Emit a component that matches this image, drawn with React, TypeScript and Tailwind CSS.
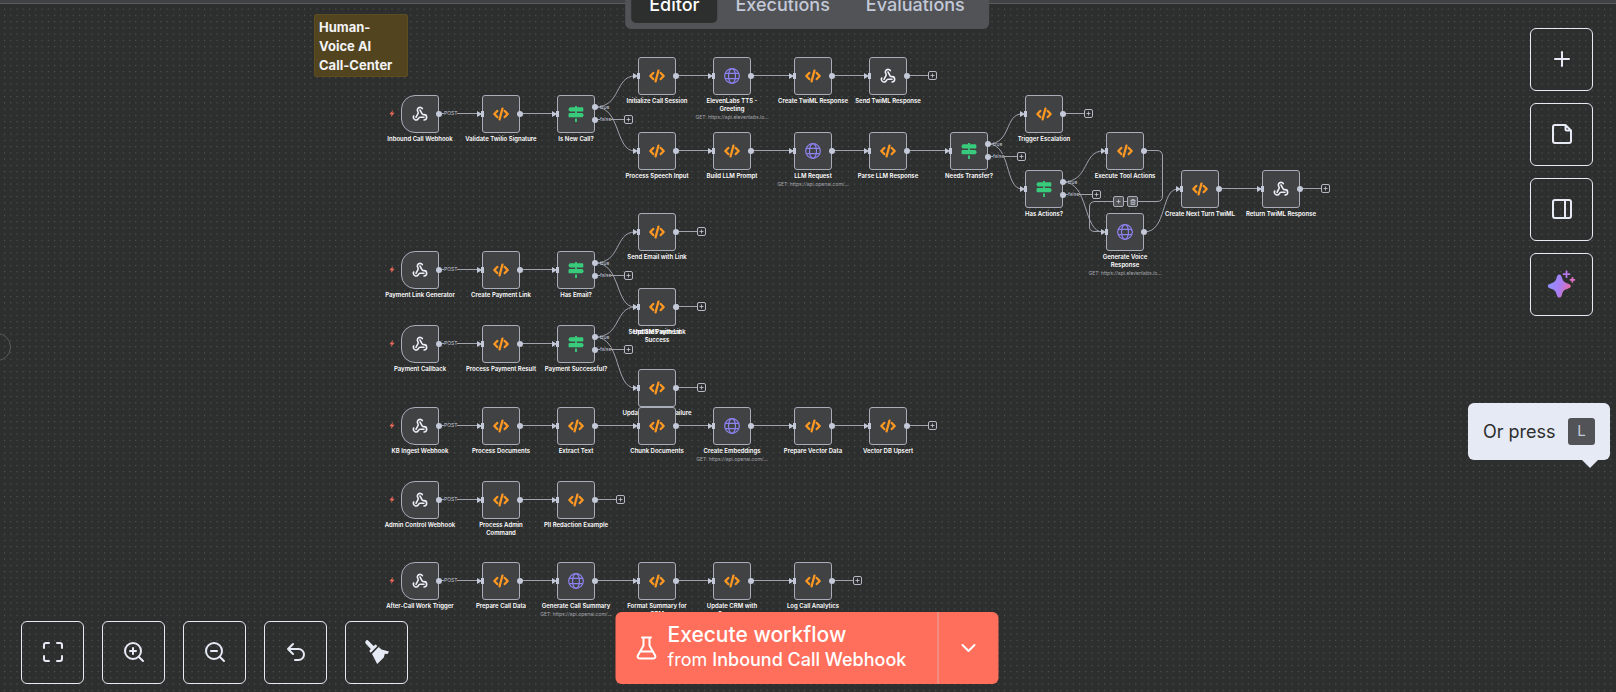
import React from "react";
import { Webhook } from "lucide-react";

type Kind = "hook" | "code" | "if" | "http";
type Item = { x: number; y: number; kind: Kind; label: string; sub?: string; end?: boolean };

const ELEVEN = "GET: https://api.elevenlabs.io...";
const OPENAI = "GET: https://api.openai.com/...";

const items: Item[] = [
  { x: 401, y: 95, kind: "hook", label: "Inbound Call Webhook" },
  { x: 482, y: 95, kind: "code", label: "Validate Twilio Signature" },
  { x: 557, y: 95, kind: "if", label: "Is New Call?" },
  { x: 638, y: 57, kind: "code", label: "Initialize Call Session" },
  { x: 713, y: 57, kind: "http", label: "ElevenLabs TTS -\nGreeting", sub: ELEVEN },
  { x: 794, y: 57, kind: "code", label: "Create TwiML Response" },
  { x: 869, y: 57, kind: "hook", label: "Send TwiML Response", end: true },
  { x: 638, y: 132, kind: "code", label: "Process Speech Input" },
  { x: 713, y: 132, kind: "code", label: "Build LLM Prompt" },
  { x: 794, y: 132, kind: "http", label: "LLM Request", sub: OPENAI },
  { x: 869, y: 132, kind: "code", label: "Parse LLM Response" },
  { x: 950, y: 132, kind: "if", label: "Needs Transfer?" },
  { x: 1025, y: 95, kind: "code", label: "Trigger Escalation", end: true },
  { x: 1025, y: 170, kind: "if", label: "Has Actions?" },
  { x: 1106, y: 132, kind: "code", label: "Execute Tool Actions" },
  { x: 1106, y: 213, kind: "http", label: "Generate Voice\nResponse", sub: ELEVEN },
  { x: 1181, y: 170, kind: "code", label: "Create Next Turn TwiML" },
  { x: 1262, y: 170, kind: "hook", label: "Return TwiML Response", end: true },
  { x: 401, y: 251, kind: "hook", label: "Payment Link Generator" },
  { x: 482, y: 251, kind: "code", label: "Create Payment Link" },
  { x: 557, y: 251, kind: "if", label: "Has Email?" },
  { x: 638, y: 213, kind: "code", label: "Send Email with Link", end: true },
  { x: 638, y: 288, kind: "code", label: "Send SMS with Link", end: true },
  { x: 638, y: 288, kind: "code", label: "Update Payment\nSuccess", end: true },
  { x: 401, y: 325, kind: "hook", label: "Payment Callback" },
  { x: 482, y: 325, kind: "code", label: "Process Payment Result" },
  { x: 557, y: 325, kind: "if", label: "Payment Successful?" },
  { x: 638, y: 369, kind: "code", label: "Update Payment Failure", end: true },
  { x: 401, y: 407, kind: "hook", label: "KB Ingest Webhook" },
  { x: 482, y: 407, kind: "code", label: "Process Documents" },
  { x: 557, y: 407, kind: "code", label: "Extract Text" },
  { x: 638, y: 407, kind: "code", label: "Chunk Documents" },
  { x: 713, y: 407, kind: "http", label: "Create Embeddings", sub: OPENAI },
  { x: 794, y: 407, kind: "code", label: "Prepare Vector Data" },
  { x: 869, y: 407, kind: "code", label: "Vector DB Upsert", end: true },
  { x: 401, y: 481, kind: "hook", label: "Admin Control Webhook" },
  { x: 482, y: 481, kind: "code", label: "Process Admin\nCommand" },
  { x: 557, y: 481, kind: "code", label: "PII Redaction Example", end: true },
  { x: 401, y: 562, kind: "hook", label: "After-Call Work Trigger" },
  { x: 482, y: 562, kind: "code", label: "Prepare Call Data" },
  { x: 557, y: 562, kind: "http", label: "Generate Call Summary", sub: OPENAI },
  { x: 638, y: 562, kind: "code", label: "Format Summary for\nCRM" },
  { x: 713, y: 562, kind: "code", label: "Update CRM with\nSummary" },
  { x: 794, y: 562, kind: "code", label: "Log Call Analytics", end: true },
];

// [source x, target x, top of the row]
const straight: [number, number, number][] = [
  [401, 482, 95], [482, 557, 95],
  [638, 713, 57], [713, 794, 57], [794, 869, 57],
  [638, 713, 132], [713, 794, 132], [794, 869, 132], [869, 950, 132],
  [1181, 1262, 170],
  [401, 482, 251], [482, 557, 251],
  [401, 482, 325], [482, 557, 325],
  [401, 482, 407], [482, 557, 407], [557, 638, 407], [638, 713, 407], [713, 794, 407], [794, 869, 407],
  [401, 482, 481], [482, 557, 481],
  [401, 482, 562], [482, 557, 562], [557, 638, 562], [638, 713, 562], [713, 794, 562],
];

// [source x, source y, target x, target y]
const curves: [number, number, number, number][] = [
  [595, 107, 638, 76], [595, 107, 638, 151],
  [988, 144, 1025, 114], [988, 144, 1025, 189],
  [1063, 182, 1106, 151], [1063, 182, 1106, 232],
  [1144, 232, 1181, 189],
  [595, 263, 638, 232], [595, 263, 638, 307],
  [595, 337, 638, 307], [595, 337, 638, 388],
];

function HookIcon() {
  return <Webhook className="size-4 text-[#eceef7]" strokeWidth={2.4} />;
}

function CodeIcon() {
  return (
    <svg viewBox="0 0 24 24" className="size-4" fill="none" stroke="#ff9922" strokeWidth="3.4" strokeLinecap="round" strokeLinejoin="round">
      <path d="M6.4 7.4 L2 12 L6.4 16.6 M17.6 7.4 L22 12 L17.6 16.6 M14.2 3.8 L9.8 20.2" />
    </svg>
  );
}

function SignIcon() {
  return (
    <svg viewBox="0 0 24 24" className="size-4" fill="#38cb7c">
      <path d="M10.6 0 h2.8 v2 h7.8 q1.8 0 1.8 1.8 v2.8 q0 1.8 -1.8 1.8 H2.6 L0.4 5.2 L2.6 2 H10.6 Z" />
      <path d="M10.6 8 h2.8 v2.6 h8.2 L23.8 13.8 L21.6 17 H2.6 q-1.8 0 -1.8 -1.8 v-2.8 q0 -1.8 1.8 -1.8 H10.6 Z" />
      <path d="M10.6 18.6 h2.8 v5.4 h-2.8 Z" />
    </svg>
  );
}

function GlobeIcon() {
  return (
    <svg viewBox="0 0 24 24" className="size-4" fill="none" stroke="#8c82f0" strokeWidth="1.8">
      <circle cx="12" cy="12" r="11" />
      <ellipse cx="12" cy="12" rx="5.2" ry="11" />
      <path d="M2 8.2 H22 M2 15.8 H22" />
    </svg>
  );
}

const icons = { hook: HookIcon, code: CodeIcon, if: SignIcon, http: GlobeIcon };

function Port({ className }: { className: string }) {
  return <span className={`absolute size-[6px] rounded-full bg-[#c3c9d8] ${className}`} />;
}

function PlusBox({ className }: { className: string }) {
  return (
    <button aria-label="Add node" className={`absolute grid size-[9px] place-items-center rounded-xs border border-[#b4b8c5] bg-[#2d2e2e] ${className}`}>
      <svg viewBox="0 0 5 5" className="size-[5px]" stroke="#c3c9d8" strokeWidth="0.8"><path d="M2.5 0.5 V4.5 M0.5 2.5 H4.5" /></svg>
    </button>
  );
}

function FlowNode({ item }: { item: Item }) {
  const Icon = icons[item.kind];
  const trigger = item.kind === "hook" && item.x === 401;
  return (
    <div className="absolute size-[38px]" style={{ left: item.x, top: item.y }}>
      <div className={`grid size-full place-items-center border border-[#a9adba] bg-[#414244] ${trigger ? "rounded-l-[14px] rounded-r-[3px]" : "rounded-[3px]"}`}>
        <Icon />
      </div>
      {trigger && (
        <>
          <svg viewBox="0 0 6 8" className="absolute top-[15px] -left-[12px] h-[7px] w-[6px]" fill="#ee6a5b"><path d="M4.2 0 L0 4.8 H2.5 L1.6 8 L6 3 H3.4 Z" /></svg>
          <span className="absolute top-[16px] left-[43px] bg-[#2d2e2e] text-[5px] leading-[5px] text-[#c3c9d8]">POST</span>
        </>
      )}
      {!trigger && <span className="absolute top-[16px] -left-px h-[6px] w-[3px] bg-[#c3c9d8]" />}
      {item.kind === "if" ? (
        <>
          <Port className="top-[9px] left-[35px]" />
          <Port className="top-[22px] left-[35px]" />
          <span className="absolute top-[10px] left-[43px] text-[5px] leading-[5px] text-[#c3c9d8]">true</span>
          <span className="absolute top-[22px] left-[43px] bg-[#2d2e2e] text-[5px] leading-[5px] text-[#c3c9d8]">false</span>
          <PlusBox className="top-[20px] left-[67px]" />
        </>
      ) : (
        <Port className="top-[16px] left-[35px]" />
      )}
      {item.end && <PlusBox className="top-[14px] left-[59px]" />}
      <div className="absolute top-[40px] left-1/2 w-max -translate-x-1/2 text-center">
        <p className="text-[6px] leading-[8px] font-semibold whitespace-pre text-white">{item.label}</p>
        {item.sub && <p className="text-[5px] leading-[8px] text-[#a5a7ad]">{item.sub}</p>}
      </div>
    </div>
  );
}

function Edges() {
  return (
    <svg className="absolute inset-0 size-full" fill="none" stroke="#a0a3ae" strokeWidth="1">
      {straight.map(([a, b, y], i) => <path key={i} d={`M${a + 38} ${y + 18.5} H${b}`} />)}
      {items.filter((n) => n.end).map((n, i) => <path key={i} d={`M${n.x + 38} ${n.y + 18.5} H${n.x + 60}`} />)}
      {items.filter((n) => n.kind === "if").map((n, i) => <path key={i} d={`M${n.x + 38} ${n.y + 24.5} H${n.x + 67}`} />)}
      {curves.map(([x, y, tx, ty], i) => {
        const m = (x + tx) / 2;
        return <path key={i} d={`M${x} ${y} C${m + 5} ${y} ${m - 2} ${ty} ${tx - 3} ${ty}`} />;
      })}
      <path d="M1144 150.5 H1157 Q1162.5 150.5 1162.5 156 V196 Q1162.5 201.5 1157 201.5 H1095 Q1089.5 201.5 1089.5 207 V227 Q1089.5 231.5 1095 231.5 H1104" />
      <g fill="#c3c9d8" stroke="none">
        {straight.map(([, b, y], i) => <path key={i} d={`M${b - 5} ${y + 16} L${b} ${y + 19} L${b - 5} ${y + 22} Z`} />)}
        {curves.map(([, , tx, ty], i) => <path key={i} d={`M${tx - 5} ${ty - 3} L${tx} ${ty} L${tx - 5} ${ty + 3} Z`} />)}
      </g>
    </svg>
  );
}

function Square({ label, children }: { label: string; children: React.ReactNode }) {
  return (
    <button aria-label={label} className="flex size-[63px] shrink-0 items-start justify-center rounded-md border border-[#e6eaf4] pt-[18px] text-[#e6eaf4]">
      {children}
    </button>
  );
}

function Glyph({ children }: { children: React.ReactNode }) {
  return (
    <svg viewBox="0 0 24 24" className="size-6" fill="none" stroke="currentColor" strokeWidth="2" strokeLinecap="round" strokeLinejoin="round">
      {children}
    </svg>
  );
}

export default function App() {
  return (
    <main className="relative flex h-screen w-full flex-col overflow-hidden bg-[#2d2e2e] font-['Inter',sans-serif]">
      <svg className="absolute inset-0 size-full" aria-hidden="true">
        <defs>
          <pattern id="dots" x="4" y="2.3" width="6.25" height="6.25" patternUnits="userSpaceOnUse">
            <rect width="1.1" height="1.1" fill="#555657" />
          </pattern>
        </defs>
        <rect width="100%" height="100%" fill="url(#dots)" />
      </svg>

      <section aria-label="Workflow" className="absolute inset-0">
        <h1 className="absolute top-[14px] left-[314px] w-[94px] rounded-xs border border-[#5c4d20] bg-[#52441f] px-1 pt-[3px] pb-px text-[13px] leading-[19px] font-bold text-[#f3f3f5]">
          Human-<br />Voice AI<br />Call-Center
        </h1>
        <Edges />
        {items.map((item, i) => <FlowNode key={i} item={item} />)}
        <div className="absolute top-[196px] left-[1113px] flex gap-[3px]">
          <button aria-label="Add node to connection" className="grid size-[11px] place-items-center rounded-xs border border-[#a9adba] bg-[#515253]">
            <svg viewBox="0 0 5 5" className="size-[5px]" stroke="#c3c9d8" strokeWidth="0.8"><path d="M2.5 0.5 V4.5 M0.5 2.5 H4.5" /></svg>
          </button>
          <button aria-label="Delete connection" className="grid size-[11px] place-items-center rounded-xs border border-[#a9adba] bg-[#515253]">
            <svg viewBox="0 0 6 6" className="size-[6px]" fill="none" stroke="#c3c9d8" strokeWidth="0.8"><path d="M0.5 1.4 H5.5 M2 1.4 V0.5 H4 V1.4 M1.2 1.4 V5.5 H4.8 V1.4 M2.4 2.6 V4.4 M3.6 2.6 V4.4" /></svg>
          </button>
        </div>
      </section>

      <header className="relative flex h-1 shrink-0 items-end justify-center border-b border-[#5a5b5d] bg-[#414244]">
        <nav className="absolute top-[-24px] left-1/2 ml-[-1px] flex -translate-x-1/2 rounded-md bg-[#525356] p-[6px] text-[18px] leading-[22px] font-medium whitespace-nowrap text-[#c3c9d8]">
          <a href="#editor" className="rounded-[5px] bg-[#2d2e2e] px-[18px] pt-3 pb-[7px] text-white">Editor</a>
          <a href="#executions" className="px-[18px] pt-3 pb-[7px]">Executions</a>
          <a href="#evaluations" className="px-[18px] pt-3 pb-[7px]">Evaluations</a>
        </nav>
      </header>

      <button aria-label="Expand sidebar" className="absolute top-[333px] -left-[17px] size-7 rounded-full border border-[#5a5b5d]" />

      <div className="relative flex flex-1 justify-end pt-6 pr-[23px]">
        <div className="flex flex-col gap-3">
          <Square label="Add node"><Glyph><path d="M12 5 V19 M5 12 H19" /></Glyph></Square>
          <Square label="Add sticky note"><Glyph><path d="M15.5 3 H5 a2 2 0 0 0 -2 2 v14 a2 2 0 0 0 2 2 h14 a2 2 0 0 0 2 -2 V8.5 Z M15.5 3 V7.5 a1 1 0 0 0 1 1 H21" /></Glyph></Square>
          <Square label="Toggle panel"><Glyph><rect x="3" y="3" width="18" height="18" rx="2" /><path d="M15 3 V21" /></Glyph></Square>
          <Square label="Ask assistant">
            <svg viewBox="0 0 32 32" className="-mt-1 size-8">
              <defs>
                <linearGradient id="spark" x1="3" y1="13" x2="25" y2="20" gradientUnits="userSpaceOnUse">
                  <stop offset="0" stopColor="#8b93ff" /><stop offset="0.55" stopColor="#ab7cf2" /><stop offset="1" stopColor="#ee6a9c" />
                </linearGradient>
              </defs>
              <path fill="url(#spark)" d="M13.3 6.6 C14.9 6.6 15.5 8 16 9.8 C17 13.2 18.3 14.4 21.6 15.4 C23.4 15.9 24.8 16.5 24.8 18.1 C24.8 19.7 23.4 20.3 21.6 20.8 C18.3 21.8 17 23 16 26.4 C15.5 28.2 14.9 29.6 13.3 29.6 C11.7 29.6 11.1 28.2 10.6 26.4 C9.6 23 8.3 21.8 5 20.8 C3.2 20.3 1.8 19.7 1.8 18.1 C1.8 16.5 3.2 15.9 5 15.4 C8.3 14.4 9.6 13.2 10.6 9.8 C11.1 8 11.7 6.6 13.3 6.6 Z" />
              <path d="M20.5 3.2 V9.2 M17.5 6.2 H23.5" stroke="#b876e8" strokeWidth="1.8" strokeLinecap="round" />
              <path d="M26.4 9.8 V13.8 M24.4 11.8 H28.4" stroke="#dd72c0" strokeWidth="1.8" strokeLinecap="round" />
            </svg>
          </Square>
        </div>
      </div>

      <div role="tooltip" className="absolute top-[403px] right-[6px] flex h-[57px] w-[142px] items-center justify-between rounded-md bg-[#e6eaf4] px-[15px] text-[18px] text-[#2d2e2e]">
        Or press
        <kbd className="grid size-[27px] place-items-center rounded-[3px] bg-[#525356] font-['Inter',sans-serif] text-[15px] text-[#c3c9d8]">L</kbd>
        <svg viewBox="0 0 16 8" className="absolute top-[57px] right-[12px] h-2 w-4" fill="#e6eaf4"><path d="M0 0 H16 L8 8 Z" /></svg>
      </div>

      <footer className="relative flex items-end justify-between px-[21px] pb-2">
        <div className="flex gap-[18px]">
          <Square label="Zoom to fit"><Glyph><path d="M3 8 V5 a2 2 0 0 1 2 -2 h3 M16 3 h3 a2 2 0 0 1 2 2 v3 M21 16 v3 a2 2 0 0 1 -2 2 h-3 M8 21 H5 a2 2 0 0 1 -2 -2 v-3" /></Glyph></Square>
          <Square label="Zoom in"><Glyph><circle cx="11" cy="11" r="8" /><path d="M21 21 L16.7 16.7 M11 8 V14 M8 11 H14" /></Glyph></Square>
          <Square label="Zoom out"><Glyph><circle cx="11" cy="11" r="8" /><path d="M21 21 L16.7 16.7 M8 11 H14" /></Glyph></Square>
          <Square label="Undo"><Glyph><path d="M9 14 L4 9 L9 4 M4 9 h10.5 a5.5 5.5 0 0 1 0 11 H11" /></Glyph></Square>
          <Square label="Tidy up">
            <svg viewBox="0 0 24 24" className="size-6" fill="currentColor">
              <path d="M1.2 0.4 C2 -0.2 2.8 0 3.4 0.7 L8.6 6 L10.6 4.6 L12.4 6 L5.8 12.8 L4.2 11 L5.8 9 L0.6 3.4 C0 2.6 0.2 1 1.2 0.4 Z" />
              <path d="M13.6 7 L16.6 9.6 L24 11.6 L22.6 14 L19.8 13.8 L18.8 17.4 L12.2 24 C11 21.6 9.6 19 7 14 Z" />
            </svg>
          </Square>
        </div>
      </footer>

      <div className="absolute bottom-2 left-1/2 ml-[-1px] flex h-[72px] -translate-x-1/2 overflow-hidden rounded-md bg-[#ff6f5c] text-white">
        <button className="flex w-[322px] items-center gap-[9px] pl-[19px] text-left">
          <svg viewBox="0 0 24 24" className="size-6 shrink-0" fill="none" stroke="currentColor" strokeWidth="2" strokeLinecap="round" strokeLinejoin="round">
            <path d="M9 1.5 V9.5 L3.4 19.4 a2 2 0 0 0 1.8 3.1 H18.8 a2 2 0 0 0 1.8 -3.1 L15 9.5 V1.5 M7.5 1.5 H16.5 M6.2 15.5 H17.8" />
          </svg>
          <span className="pb-[2px] whitespace-nowrap">
            <span className="block text-[21px] leading-[25px] font-medium">Execute workflow</span>
            <span className="block text-[18px] leading-[25px]">from <span className="font-medium">Inbound Call Webhook</span></span>
          </span>
        </button>
        <button aria-label="Choose trigger" className="grid w-[61px] place-items-center border-l border-[#e5a99f]">
          <Glyph><path d="M6 9 L12 15 L18 9" /></Glyph>
        </button>
      </div>
    </main>
  );
}
